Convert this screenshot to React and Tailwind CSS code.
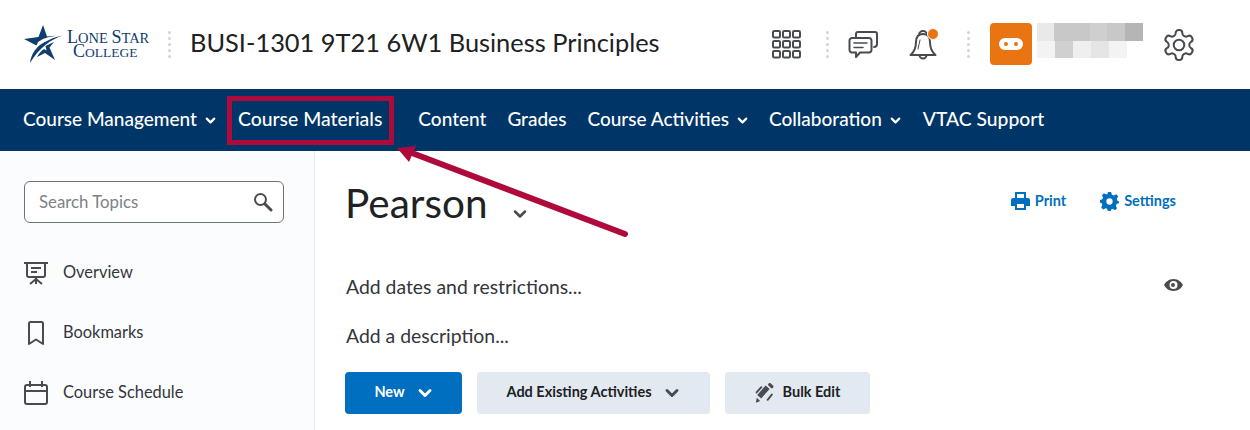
import { ChevronDown } from 'lucide-react';

const font = { fontFamily: 'Lato, sans-serif' };

const blurTop = ['bg-[#e9e9e9]', 'bg-[#c8c8c8]', 'bg-[#c8c8c8]', 'bg-[#cfcfcf]', 'bg-[#c8c8c8]', 'bg-[#b5b5b5]'];
const blurBottom = ['bg-[#f3f3f3]', 'bg-[#d0d0d0]', 'bg-[#efefef]', 'bg-[#e5e5e5]', 'bg-[#f3f3f3]'];

function Dots() {
  return (
    <div className="flex flex-col gap-[3px]">
      {[0, 1, 2, 3, 4].map((i) => (
        <div key={i} className="w-[3px] h-[3px] rounded-full bg-[#cdd5dc]"></div>
      ))}
    </div>
  );
}

function Logo() {
  return (
    <div className="flex items-center">
      <svg width="40" height="40" viewBox="0 0 40 40" className="shrink-0">
        <path fill="#0f3d6e" d="M0 14 L14.500 12 L19 0 L23 11.500 L39 10 C31 10.500 24 12 19 14 L14 17 L12.500 20.500 Z" />
        <path fill="#0f3d6e" d="M39 10.500 C27 14 15 23 6 38 C7 30 11 24 16 20 C22 16 30 12 39 10.500 Z" />
        <path fill="#0f3d6e" d="M30 17 L25.500 22.500 L31 35 L21 28 L13 32 C15 28.500 17 26 20 24 L22.500 25.500 L21.500 21 Z" />
      </svg>
      <div className="ml-[3px] flex flex-col items-start text-[#0f3d6e] font-['Liberation_Serif',serif] leading-[14px] -mt-[1px]">
        <div className="h-[14px] text-[14.500px] whitespace-nowrap"><span className="text-[18px]">L</span>ONE <span className="text-[18px]">S</span>TAR</div>
        <div className="h-[14px] text-[13.500px] ml-[6px] whitespace-nowrap"><span className="text-[18px]">C</span>OLLEGE</div>
      </div>
    </div>
  );
}

function Header() {
  return (
    <header className="h-[89px] bg-white flex items-center pl-[24px]">
      <div className="w-[123px]"><Logo /></div>
      <div className="ml-[21px] mr-[20px]"><Dots /></div>
      <h1 className="-ml-[1px] mb-[4px] text-[25.400px] text-[#202122] whitespace-nowrap">BUSI-1301 9T21 6W1 Business Principles</h1>
      <div className="ml-[112px] flex items-center">
        <svg width="30" height="30" viewBox="0 0 30 30" fill="none" stroke="#494c4e" strokeWidth="2">
          {[1, 11, 21].map((y) =>
            [1, 11, 21].map((x) => <rect key={`${x}-${y}`} x={x} y={y} width="7" height="6.500" rx="1.200" />)
          )}
        </svg>
        <div className="ml-[24px]"><Dots /></div>
        <svg className="ml-[19px]" width="32" height="32" viewBox="0 0 32 32" fill="none" stroke="#494c4e" strokeWidth="2" strokeLinejoin="round" strokeLinecap="round">
          <path d="M8 8 V5 a2 2 0 0 1 2-2 H27 a2 2 0 0 1 2 2 V15 a3 3 0 0 1-3 3" />
          <path d="M4 9 H21 a2.500 2.500 0 0 1 2.500 2.500 V21 a2.500 2.500 0 0 1-2.500 2.500 H12 L8 28 V23.500 H4 a2.500 2.500 0 0 1-2.500-2.500 V11.500 A2.500 2.500 0 0 1 4 9 Z" fill="white" />
          <path d="M6 14 H19 M6 18.500 H15" strokeWidth="1.600" />
        </svg>
        <div className="relative ml-[29px] w-[30px] h-[32px]">
          <svg width="28" height="32" viewBox="0 0 28 32" fill="none" stroke="#494c4e" strokeWidth="2" strokeLinejoin="round" strokeLinecap="round">
            <path d="M10 6 a4 4 0 0 1 8 0" />
            <path d="M14 5 C8 5 7 9 7 13 C7 19 5 23 1.500 26 H26.500 C23 23 21 19 21 13 C21 9 20 5 14 5 Z" />
            <path d="M10.500 26 a3.500 3.500 0 0 0 7 0" />
            <path d="M11 11 C10 14 10 17 9 20" strokeWidth="1" />
          </svg>
          <div className="absolute left-[18px] -top-[1px] w-[10px] h-[10px] rounded-full bg-[#e87511] border border-white box-content"></div>
        </div>
        <div className="ml-[28px]"><Dots /></div>
        <div className="ml-[20px] -mt-[2px] w-[42px] h-[42px] rounded-[4px] bg-[#e87511] flex items-center justify-center">
          <svg width="24" height="12" viewBox="0 0 24 12">
            <rect width="24" height="12" rx="6" fill="white" />
            <circle cx="7" cy="6" r="2" fill="#e87511" />
            <circle cx="17" cy="6" r="2" fill="#e87511" />
          </svg>
        </div>
        <div className="w-[106px] h-[42px] ml-[5px] -mt-[2px] flex flex-col">
          <div className="flex h-[18px]">
            {blurTop.map((c, i) => <div key={i} className={`w-[18px] ${c}`}></div>)}
          </div>
          <div className="flex h-[17px]">
            {blurBottom.map((c, i) => <div key={i} className={`w-[18px] ${c}`}></div>)}
          </div>
        </div>
        <svg className="ml-[18px]" width="36" height="36" viewBox="0 0 24 24" fill="none" stroke="#494c4e" strokeWidth="1.350" strokeLinecap="round" strokeLinejoin="round">
          <path d="M12.220 2h-.44a2 2 0 0 0-2 2v.18a2 2 0 0 1-1 1.730l-.43.250a2 2 0 0 1-2 0l-.150-.080a2 2 0 0 0-2.730.730l-.220.380a2 2 0 0 0 .730 2.730l.150.100a2 2 0 0 1 1 1.720v.510a2 2 0 0 1-1 1.740l-.150.090a2 2 0 0 0-.730 2.730l.220.380a2 2 0 0 0 2.730.730l.150-.080a2 2 0 0 1 2 0l.430.250a2 2 0 0 1 1 1.730V20a2 2 0 0 0 2 2h.440a2 2 0 0 0 2-2v-.18a2 2 0 0 1 1-1.730l.430-.250a2 2 0 0 1 2 0l.150.080a2 2 0 0 0 2.730-.730l.220-.390a2 2 0 0 0-.730-2.730l-.150-.080a2 2 0 0 1-1-1.740v-.500a2 2 0 0 1 1-1.740l.150-.090a2 2 0 0 0 .730-2.730l-.220-.380a2 2 0 0 0-2.730-.730l-.150.080a2 2 0 0 1-2 0l-.430-.250a2 2 0 0 1-1-1.730V4a2 2 0 0 0-2-2z" />
          <circle cx="12" cy="12" r="3.500" />
        </svg>
      </div>
    </header>
  );
}

function NavItem({ label, chevron, className }) {
  return (
    <div className={`flex items-center whitespace-nowrap ${className}`}>
      <span>{label}</span>
      {chevron && <ChevronDown size={15} strokeWidth={3.500} className="ml-[6px] mt-[3px]" />}
    </div>
  );
}

function Nav() {
  return (
    <nav className="h-[62px] bg-[#003568] text-white text-[19px] font-medium flex items-center pl-[23px] pb-[2px]">
      <NavItem label="Course Management" chevron />
      <NavItem label="Course Materials" className="ml-[20px] text-[19.400px]" />
      <NavItem label="Content" className="ml-[36px]" />
      <NavItem label="Grades" className="ml-[21px]" />
      <NavItem label="Course Activities" chevron className="ml-[21px]" />
      <NavItem label="Collaboration" chevron className="ml-[19px]" />
      <NavItem label="VTAC Support" className="ml-[20px] text-[19.300px]" />
    </nav>
  );
}

function SideItem({ icon, label }) {
  return (
    <div className="h-[60px] flex items-center">
      <div className="w-[39px] flex">{icon}</div>
      <span className="-mt-[1px] text-[16.400px] text-[#33363a]">{label}</span>
    </div>
  );
}

function Sidebar() {
  return (
    <aside className="w-[315px] shrink-0 h-[279px] bg-[#fbfcfe] border-r border-[#e6eaf0] pl-[24px] pt-[30px]">
      <div className="w-[260px] h-[42px] bg-white border border-[#6e7376] rounded-[6px] flex items-center justify-between pl-[14px] pr-[10px]">
        <span className="text-[16.800px] -mt-[1px] text-[#7c8286]">Search Topics</span>
        <svg width="20" height="20" viewBox="0 0 20 20" fill="none" stroke="#494c4e">
          <circle cx="7.500" cy="7.500" r="5.500" strokeWidth="2" />
          <path d="M12 12 L18 18" strokeWidth="3" strokeLinecap="round" />
        </svg>
      </div>
      <div className="mt-[20px]">
        <SideItem
          label="Overview"
          icon={
            <svg width="24" height="24" viewBox="0 0 24 24" fill="none" stroke="#494c4e" strokeWidth="2">
              <path d="M0 2 H24 M3 2 V14 a2 2 0 0 0 2 2 H19 a2 2 0 0 0 2-2 V2" />
              <path d="M7 7 H17 M7 11 H13" />
              <path d="M12 16 V23 M6 23 L12 18 L18 23" />
            </svg>
          }
        />
        <SideItem
          label="Bookmarks"
          icon={
            <svg className="ml-[4px]" width="16" height="24" viewBox="0 0 16 24" fill="none" stroke="#494c4e" strokeWidth="2" strokeLinejoin="round">
              <path d="M2.500 1 H13.500 a1.500 1.500 0 0 1 1.500 1.500 V23 L8 18.500 L1 23 V2.500 A1.500 1.500 0 0 1 2.500 1 Z" />
            </svg>
          }
        />
        <SideItem
          label="Course Schedule"
          icon={
            <svg width="24" height="24" viewBox="0 0 24 24" fill="none" stroke="#494c4e" strokeWidth="2">
              <rect x="1" y="4" width="22" height="19" rx="2" />
              <path d="M1 10 H23 M6 0 V6 M18 0 V6" />
            </svg>
          }
        />
      </div>
    </aside>
  );
}

function Main() {
  return (
    <main className="flex-1 pl-[30px] pr-[67px] relative">
      <div className="flex items-start justify-between pt-[24px] h-[108px]">
        <div className="flex items-center">
          <h2 className="text-[40.500px] leading-[56px] text-[#202122]">Pearson</h2>
          <ChevronDown size={20} strokeWidth={3} color="#494c4e" className="ml-[23px] mt-[21px]" />
        </div>
        <div className="flex items-center gap-[34px] mt-[16px] mr-[7px] text-[#006fbf] text-[14.500px] font-bold">
          <div className="flex items-center gap-[5px]">
            <svg width="19" height="18" viewBox="0 0 19 18" fill="#006fbf">
              <path fillRule="evenodd" d="M4 0 H15 V6 H17 a2 2 0 0 1 2 2 V14 H15 V18 H4 V14 H0 V8 a2 2 0 0 1 2-2 H4 Z M6 2 V6 H13 V2 Z M6 12 V16 H13 V12 Z" />
            </svg>
            <span className="-mt-[1px]">Print</span>
          </div>
          <div className="flex items-center gap-[5px]">
            <svg width="19" height="19" viewBox="0 0 24 24" fill="#006fbf">
              <path fillRule="evenodd" d="M10 0 H14 L15 3.500 L17.500 4.500 L20.500 2.800 L23 5.500 L21.200 8.500 L22 11 L24 12 V14 L21 15 L20 17.500 L21.500 20.500 L19 23 L16 21.200 L14 22 L13.500 24 H10 L9 21 L7 20.500 L4 22 L1.500 19.500 L3 16.500 L2 14 L0 13.500 V10 L3 9 L3.800 7 L2.500 4 L5 1.500 L8 3 L9.500 2.500 Z M12 8 a4 4 0 1 0 0 8 a4 4 0 0 0 0-8 Z" />
            </svg>
            <span className="-mt-[1px]">Settings</span>
          </div>
        </div>
      </div>
      <div className="flex items-center justify-between h-[28px] mt-[14px]">
        <span className="pl-[1px] text-[19.400px] text-[#33363a]">Add dates and restrictions...</span>
        <svg className="-mt-[5px]" width="19" height="12" viewBox="0 0 19 12" fill="#494c4e">
          <path fillRule="evenodd" d="M9.500 0 C14 0 17.500 3 19 6 C17.500 9 14 12 9.500 12 C5 12 1.500 9 0 6 C1.500 3 5 0 9.500 0 Z M9.500 2 a4 4 0 1 0 0 8 a4 4 0 0 0 0-8 Z M9 4 a2 2 0 1 1 0 4 a2 2 0 0 1 0-4 Z" />
        </svg>
      </div>
      <div className="h-[28px] mt-[21px] flex items-center">
        <span className="pl-[1px] text-[19.400px] text-[#33363a]">Add a description...</span>
      </div>
      <div className="flex gap-[15px] mt-[22px]">
        <button className="w-[117px] h-[42px] rounded-[4px] bg-[#006fbf] text-white text-[14.500px] font-bold flex items-center justify-center gap-[10px]">
          <span className="-mt-[2px] ml-[2px]">New</span> <ChevronDown size={20} strokeWidth={3.500} />
        </button>
        <button className="w-[233px] h-[42px] rounded-[4px] bg-[#e3e9f1] text-[#202122] text-[14.500px] font-bold flex items-center justify-center gap-[10px]">
          <span className="-mt-[2px] ml-[1px]">Add Existing Activities</span> <ChevronDown size={20} strokeWidth={3.500} color="#494c4e" />
        </button>
        <button className="w-[145px] h-[42px] rounded-[4px] bg-[#e3e9f1] text-[#202122] text-[14.500px] font-bold flex items-center justify-center gap-[8px]">
          <svg width="20" height="20" viewBox="0 0 19 19" fill="#494c4e" stroke="#494c4e" strokeLinecap="round">
            <path d="M4 13 L12 4" strokeWidth="5" strokeLinecap="butt" />
            <path d="M14 1.500 L16 3.500" strokeWidth="3" />
            <path d="M1.500 18 L2 15 L4 17 Z" strokeWidth="1" />
            <path d="M1.500 9 L6 4 M12 16 L16 11" strokeWidth="1.800" />
          </svg>
          <span className="-mt-[2px]">Bulk Edit</span>
        </button>
      </div>
    </main>
  );
}

export default function App() {
  return (
    <div className="relative w-[1250px] h-[430px] overflow-hidden bg-white" style={font}>
      <Header />
      <Nav />
      <div className="flex">
        <Sidebar />
        <Main />
      </div>
      {/* red annotations on top of the screenshot */}
      <div className="absolute left-[227px] top-[96px] w-[167px] h-[49px] border-[5px] border-[#ae0a3b]"></div>
      <svg className="absolute left-[390px] top-[140px]" width="245" height="105" viewBox="0 0 245 105" fill="none">
        <path d="M22 13 L235 94" stroke="#ae0a3b" strokeWidth="6" strokeLinecap="round" />
        <path d="M7 8 L26 6 L19 22 Z" fill="#ae0a3b" />
      </svg>
    </div>
  );
}
